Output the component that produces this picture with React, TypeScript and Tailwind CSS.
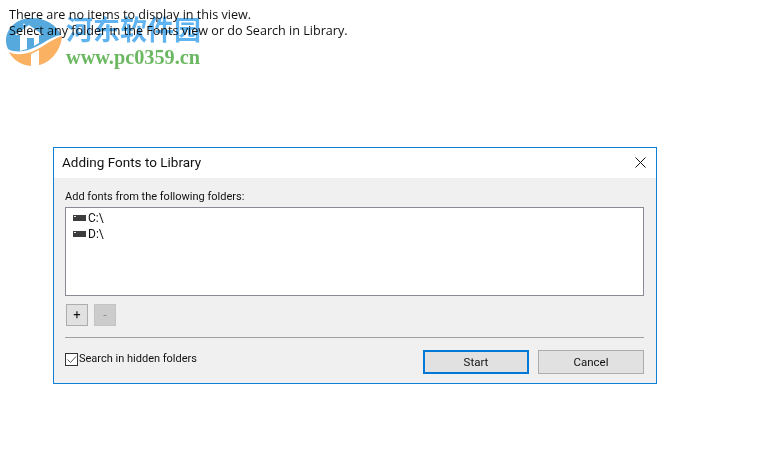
import React from "react";

const dialogFont = "font-['Roboto','Noto_Sans',sans-serif]";

function DriveIcon() {
  return (
    <svg width="13" height="6" viewBox="0 0 13 6" className="shrink-0">
      <rect width="13" height="6" fill="#3c3c3c" />
      <rect x="1" y="1" width="2" height="1" fill="#e8e8e8" />
    </svg>
  );
}

function DriveRow({ label }: { label: string }) {
  return (
    <div className="flex items-center gap-[2px] h-[16px] text-[12px] text-[#111]">
      <DriveIcon />
      <span>{label}</span>
    </div>
  );
}

function Watermark() {
  return (
    <div className="absolute left-[5px] top-[14px] flex pointer-events-none mix-blend-multiply">
      <svg width="58" height="53" viewBox="0 0 58 53" className="shrink-0">
        <path d="M1 27 C1 14 12 4 27 4 C40 4 52 11 56 21 C50 22 44 25 38 29 C28 35 14 41 3 35 C2 33 1 30 1 27 Z" fill="#55a9dc" />
        <path d="M24 11 L38 21 L34 21 L34 29 L29 32 L29 24 L22 24 L22 35 L15 37 L15 21 L10 21 Z" fill="#ffffff" />
        <path d="M19 9 L20 11 L18 11 Z" fill="#ffffff" />
        <path d="M4 38 C14 43 27 39 38 32 C44 28 51 24 57 22 C56 38 43 52 28 52 C17 52 8 46 4 38 Z" fill="#fbb162" />
        <path d="M26 40 L34 36 L34 52 L26 52 Z" fill="#ffffff" />
      </svg>
      <div className="ml-[3px] flex flex-col">
        <span className="text-[27px] leading-[30px] font-bold text-[#5fb3f0] font-['Noto_Sans_CJK_SC',sans-serif]">河东软件园</span>
        <span className="mt-[3px] text-[20.3px] leading-[20px] font-bold text-[#6cb862] font-['Liberation_Serif',serif]">www.pc0359.cn</span>
      </div>
    </div>
  );
}

export default function App() {
  return (
    <div className="relative w-[774px] h-[460px] overflow-hidden bg-white">
      <div className="pt-[7px] pl-[9px] text-[12.6px] leading-[16px] text-[#111] font-['Open_Sans',sans-serif]">
        <p>There are no items to display in this view.</p>
        <p>Select any folder in the Fonts view or do Search in Library.</p>
      </div>
      <Watermark />

      <div className={`ml-[53px] mt-[108px] w-[604px] h-[237px] border border-[#0f80d8] flex flex-col bg-[#f0f0f0] ${dialogFont}`}>
        <div className="h-[30px] bg-white flex items-center justify-between pl-[8px] pr-[10px] pb-[2px]">
          <span className="text-[13.5px] text-[#111]">Adding Fonts to Library</span>
          <svg width="11" height="11" viewBox="0 0 11 11">
            <path d="M0.5 0.5 L10.5 10.5 M10.5 0.5 L0.5 10.5" stroke="#111" strokeWidth="1" />
          </svg>
        </div>

        <div className="flex-1 flex flex-col pl-[11px] pr-[12px] pt-[10px]">
          <div className="text-[11px] leading-[16px] h-[19px] pt-[1px] text-[#111]">Add fonts from the following folders:</div>
          <div className="h-[89px] bg-white border border-[#8a8a94] pl-[7px] pt-[2px]">
            <DriveRow label="C:\" />
            <DriveRow label="D:\" />
          </div>

          <div className="flex gap-[6px] mt-[8px] ml-[1px]">
            <div className="w-[22px] h-[22px] bg-[#e1e1e1] border border-[#adadad] flex items-center justify-center text-[13px] text-[#111]">+</div>
            <div className="w-[22px] h-[22px] bg-[#cccccc] border border-[#c4c4c4] flex items-center justify-center text-[12px] text-[#8a8a8a]">-</div>
          </div>

          <div className="mt-[11px] h-[1px] bg-[#a0a0a0]" />

          <div className="flex justify-between mt-[12px]">
            <div className="flex items-center gap-[1px] h-[24px] pb-[5px]">
              <div className="w-[13px] h-[13px] bg-white border border-[#333] flex items-center justify-center">
                <svg width="11" height="11" viewBox="0 0 11 11">
                  <path d="M1.5 5.5 L4.5 8.5 L10 2.5" fill="none" stroke="#555" strokeWidth="1" />
                </svg>
              </div>
              <span className="text-[11px] text-[#111]">Search in hidden folders</span>
            </div>
            <div className="flex gap-[9px]">
              <div className="w-[106px] h-[24px] bg-[#e1e1e1] border-2 border-[#0078d7] flex items-center justify-center pt-[1px] text-[11.5px] text-[#111]">Start</div>
              <div className="w-[106px] h-[24px] bg-[#e1e1e1] border border-[#adadad] flex items-center justify-center pt-[1px] text-[11.5px] text-[#111]">Cancel</div>
            </div>
          </div>
        </div>
      </div>
    </div>
  );
}
